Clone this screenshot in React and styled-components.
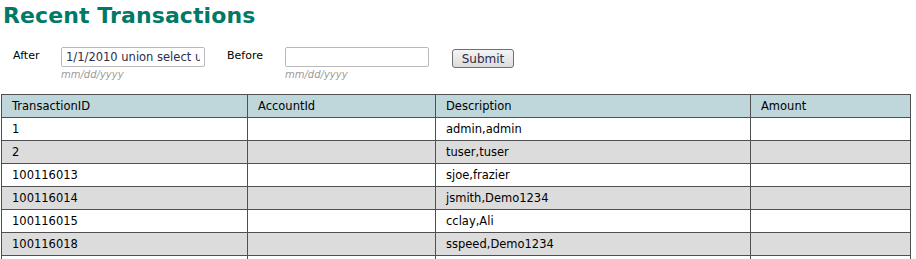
import React from "react";
import styled, { createGlobalStyle } from "styled-components";

const Global = createGlobalStyle`
  html, body { margin: 0; padding: 0; background: #fff; }
  body { font-family: "DejaVu Sans", Verdana, sans-serif; }
`;

const Page = styled.div`
  padding: 0 0 0 1px;
`;

const Title = styled.h1`
  margin: 0 0 0 2px;
  padding-top: 2px;
  font-family: "DejaVu Sans", Tahoma, sans-serif;
  font-weight: bold;
  font-size: 22px;
  line-height: 27px;
  letter-spacing: 0.1px;
  color: #007a66;
`;

const Form = styled.form`
  display: flex;
  align-items: flex-start;
  margin-top: 18px;
  padding-left: 12px;
  height: 47px;
`;

const Label = styled.label`
  width: ${(p) => p.$w}px;
  padding-top: 2px;
  font-size: 11px;
  line-height: 14px;
  color: #000;
`;

const FieldCol = styled.div`
  display: flex;
  flex-direction: column;
  margin-right: ${(p) => p.$mr}px;
`;

const Input = styled.input`
  box-sizing: border-box;
  width: 144px;
  height: 20px;
  padding: 0 4px;
  border: 1px solid #b9b9b9;
  border-radius: 2px;
  font-family: "DejaVu Sans", Verdana, sans-serif;
  font-size: 11.5px;
  color: #2c2c4a;
  outline: none;
`;

const Hint = styled.span`
  margin-top: 1px;
  font-size: 10px;
  font-style: italic;
  color: #9a9a9a;
  line-height: 13px;
`;

const Button = styled.button`
  margin-top: 2px;
  box-sizing: border-box;
  width: 62px;
  height: 19px;
  padding: 0;
  border: 1px solid #707070;
  border-radius: 3px;
  background: linear-gradient(#f4f4f4, #dcdcdc);
  font-family: "DejaVu Sans", Verdana, sans-serif;
  font-size: 12px;
  color: #2c2c4a;
`;

const Table = styled.table`
  border-collapse: collapse;
  width: 909px;
  table-layout: fixed;
  font-size: 11.5px;
`;

const Th = styled.th`
  box-sizing: border-box;
  width: ${(p) => p.$w}px;
  height: 23px;
  padding: 0 0 0 10px;
  border: 1px solid #505050;
  background: #bfd7db;
  font-weight: normal;
  text-align: left;
  color: #000;
`;

const Tr = styled.tr`
  background: ${(p) => (p.$alt ? "#dcdcdc" : "#ffffff")};
`;

const Td = styled.td`
  box-sizing: border-box;
  height: 23px;
  padding: 0 0 0 10px;
  border: 1px solid #505050;
  color: #000;
`;

const rows = [
  ["1", "", "admin,admin", ""],
  ["2", "", "tuser,tuser", ""],
  ["100116013", "", "sjoe,frazier", ""],
  ["100116014", "", "jsmith,Demo1234", ""],
  ["100116015", "", "cclay,Ali", ""],
  ["100116018", "", "sspeed,Demo1234", ""],
  ["", "", "", ""],
];

export default function App() {
  return (
    <Page>
      <Global />
      <Title>Recent Transactions</Title>
      <Form onSubmit={(e) => e.preventDefault()}>
        <Label $w={48}>After</Label>
        <FieldCol $mr={22}>
          <Input defaultValue="1/1/2010 union select userid,username,password from users" />
          <Hint>mm/dd/yyyy</Hint>
        </FieldCol>
        <Label $w={58}>Before</Label>
        <FieldCol $mr={23}>
          <Input defaultValue="" />
          <Hint>mm/dd/yyyy</Hint>
        </FieldCol>
        <Button type="submit">Submit</Button>
      </Form>
      <Table>
        <thead>
          <tr>
            <Th $w={246}>TransactionID</Th>
            <Th $w={188}>AccountId</Th>
            <Th $w={315}>Description</Th>
            <Th $w={160}>Amount</Th>
          </tr>
        </thead>
        <tbody>
          {rows.map((r, i) => (
            <Tr key={i} $alt={i % 2 === 1}>
              {r.map((c, j) => (
                <Td key={j}>{c}</Td>
              ))}
            </Tr>
          ))}
        </tbody>
      </Table>
    </Page>
  );
}
